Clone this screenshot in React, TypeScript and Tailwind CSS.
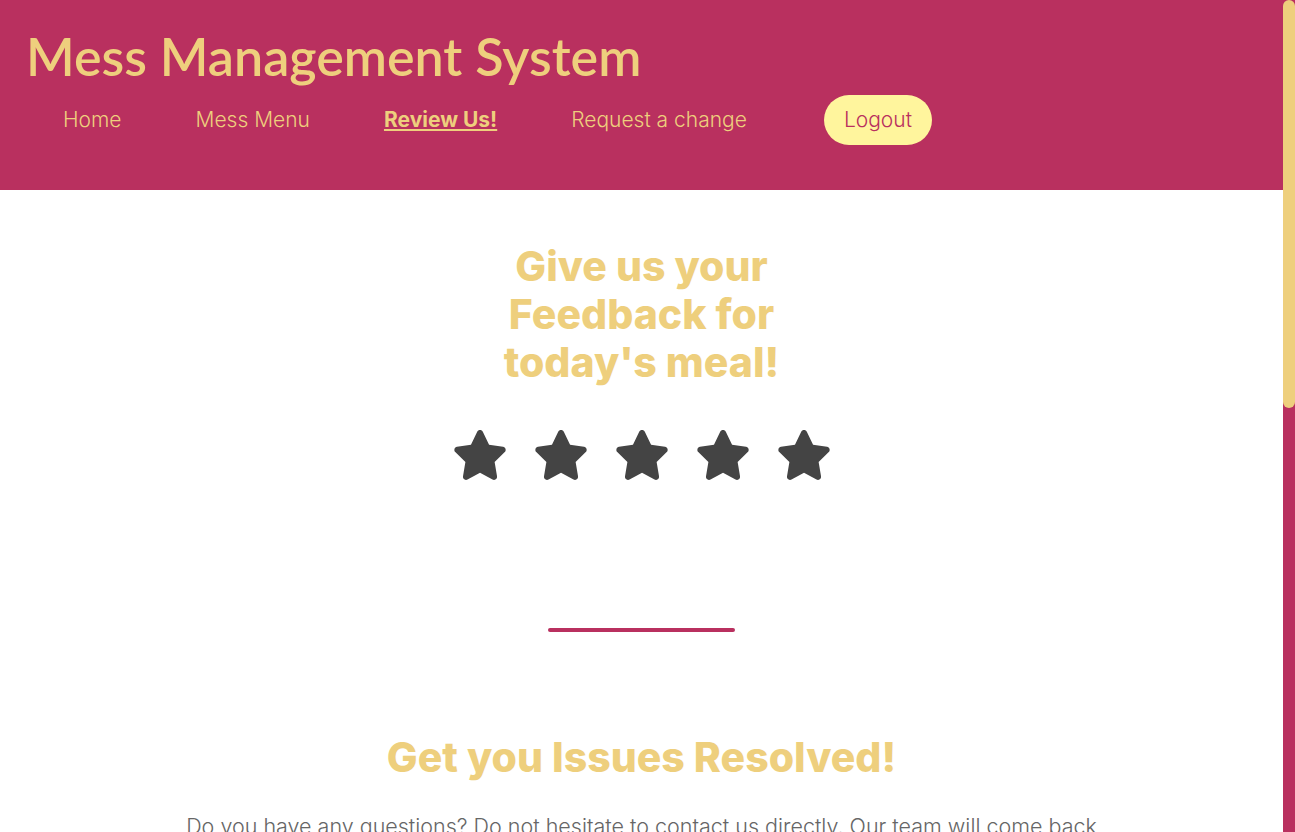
import React from "react";
import { FaStar } from "react-icons/fa6";

const navItems = [
  { label: "Home", active: false },
  { label: "Mess Menu", active: false },
  { label: "Review Us!", active: true },
  { label: "Request a change", active: false },
];

const Header = () => {
  return (
    <header className="bg-[#b9305f] h-[190px] shrink-0 pl-[26px] pt-[24px]">
      <h1 className="text-[#eecf7d] text-[52px] leading-[64px] font-semibold" style={{ fontFamily: "Lato, 'Open Sans', sans-serif" }}>
        Mess Management System
      </h1>
      <nav className="flex items-center mt-[7px]">
        {navItems.map((item) => (
          <a
            key={item.label}
            className={
              "px-[37px] text-[21px] text-[#eecf7d] " +
              (item.active ? "font-bold underline underline-offset-2" : "font-light")
            }
          >
            {item.label}
          </a>
        ))}
        <button className="ml-[40px] h-[50px] px-[20px] rounded-full bg-[#fff59d] text-[#b9305f] text-[21px] font-light">
          Logout
        </button>
      </nav>
    </header>
  );
};

const Stars = () => {
  return (
    <div className="flex justify-center gap-[25px] mt-[41px]">
      {[1, 2, 3, 4, 5].map((n) => (
        <FaStar key={n} className="w-[56px] h-[56px] text-[#444444]" />
      ))}
    </div>
  );
};

const App = () => {
  return (
    <div className="flex h-[832px] overflow-hidden bg-white" style={{ fontFamily: "Inter, 'Noto Sans', sans-serif" }}>
      <div className="w-[1283px] shrink-0 flex flex-col">
        <Header />
        <section className="flex flex-col items-center pt-[52px]">
          <h2 className="text-center text-[#eecf7d] text-[41px] leading-[48px] font-extrabold">
            Give us your
            <br />
            Feedback for
            <br />
            today's meal!
          </h2>
          <Stars />
          <div className="w-[187px] h-[4px] rounded-full bg-[#b9305f] mt-[145px]" />
          <h2 className="text-center text-[#eecf7d] text-[41px] leading-[48px] font-extrabold mt-[101px]">
            Get you Issues Resolved!
          </h2>
          <p className="text-[#666666] text-[21.5px] font-light mt-[29px] w-[920px] text-center">
            Do you have any questions? Do not hesitate to contact us directly. Our team will come back to you within a
            matter of hours to help you.
          </p>
        </section>
      </div>
      <div className="w-[12px] shrink-0 bg-[#b9305f] flex flex-col">
        <div className="h-[408px] w-full rounded-full bg-[#eecf7d]" />
      </div>
    </div>
  );
};

export default App;
